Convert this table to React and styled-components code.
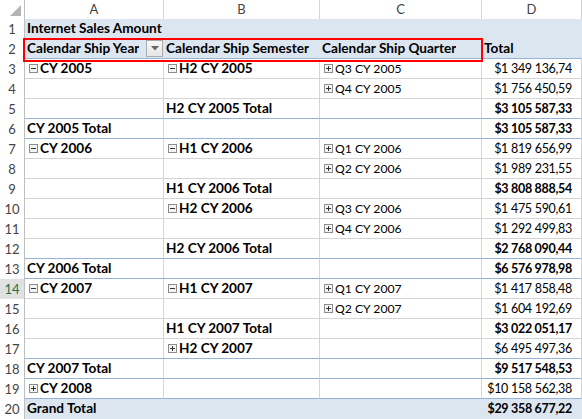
import React from 'react';
import styled, { createGlobalStyle } from 'styled-components';

const GRID = '#d4d4d4';
const BLUE_LINE = '#95b3d7';
const BLUE_FILL = '#dce6f1';
const COLS = '25px 139px 156px 162px 1fr';

const GlobalStyle = createGlobalStyle`
    body {
        margin: 0;
        background: #fff;
        font-family: Lato, 'Liberation Sans', sans-serif;
        font-size: 13px;
        color: #000;
    }
`;

const Sheet = styled.div`
    position: relative;
    width: 582px;
    height: 419px;
    overflow: hidden;
`;

const Row = styled.div`
    display: grid;
    grid-template-columns: ${COLS};
    height: ${(p) => (p.$head ? '19px' : '20px')};
`;

const ColHead = styled.div`
    box-sizing: border-box;
    border-right: 1px solid ${GRID};
    border-bottom: 1px solid ${GRID};
    color: #444;
    text-align: center;
    line-height: 18px;
`;

const Corner = styled.div`
    box-sizing: border-box;
    border-right: 1px solid #bfbfbf;
    border-bottom: 1px solid ${GRID};
`;

const RowNum = styled.div`
    box-sizing: border-box;
    border-right: 1px solid #bfbfbf;
    background: ${(p) => (p.$active ? '#e1e1e1' : '#fff')};
    color: ${(p) => (p.$active ? '#217346' : '#444')};
    text-align: center;
    line-height: 20px;
`;

// Calibri в оригинале: жирный шире, обычный и цифры уже, чем у Lato
const fontSize = (p) => {
    if (p.$num) return '12.5px';
    return p.$bold ? '13.6px' : '12.2px';
};

const Cell = styled.div`
    box-sizing: border-box;
    display: flex;
    align-items: center;
    justify-content: ${(p) => (p.$right ? 'flex-end' : 'flex-start')};
    gap: 2px;
    padding: ${(p) => (p.$right ? '0 9px 0 0' : p.$icon ? '0 0 0 4px' : '0 0 0 2px')};
    background: ${(p) => (p.$fill ? BLUE_FILL : '#fff')};
    border-right: 1px solid ${(p) => (p.$fill ? BLUE_FILL : GRID)};
    border-bottom: 1px solid ${(p) => p.$line};
    font-size: ${fontSize};
    font-weight: ${(p) => (p.$bold ? 700 : 400)};
    letter-spacing: ${(p) => (p.$num ? '-0.3px' : '0')};
    line-height: 19px;
    white-space: pre;
    overflow: hidden;
`;

const Label = styled.span`
    flex: 0 1 auto;
    overflow: hidden;
`;

const FilterButton = styled.div`
    box-sizing: border-box;
    flex: none;
    margin-left: auto;
    width: 17px;
    height: 17px;
    border: 1px solid #ababab;
    background: linear-gradient(#f7f7f7, #e6e6e6);
    display: flex;
    align-items: center;
    justify-content: center;
`;

const Highlight = styled.div`
    position: absolute;
    left: 23px;
    top: 38px;
    width: 460px;
    height: 24px;
    box-sizing: border-box;
    border: 2px solid #ff0000;
    pointer-events: none;
`;

const Toggle = ({ plus }) => (
    <svg width="9" height="9" viewBox="0 0 9 9" style={{ flex: 'none' }}>
        <rect x="0.5" y="0.5" width="8" height="8" fill="#f3f3f3" stroke="#8c8c8c" />
        <line x1="2" y1="4.5" x2="7" y2="4.5" stroke="#333" />
        {plus && <line x1="4.5" y1="2" x2="4.5" y2="7" stroke="#333" />}
    </svg>
);

// строки сводной таблицы: a/b/c — подписи, d — сумма
const b = (t, icon) => ({ t, bold: true, icon });
const n = (t, icon) => ({ t, icon });

const rows = [
    { a: b('Internet Sales Amount'), fill: true },
    {
        a: { ...b('Calendar Ship Year'), filter: true },
        b: b('Calendar Ship Semester'),
        c: b('Calendar Ship Quarter'),
        d: b('Total'),
        dLeft: true,
        fill: true,
        blue: true,
    },
    { a: b('CY 2005', 'minus'), b: b('H2 CY 2005', 'minus'), c: n('Q3 CY 2005', 'plus'), d: n('$1 349 136,74') },
    { c: n('Q4 CY 2005', 'plus'), d: n('$1 756 450,59') },
    { b: b('H2 CY 2005 Total'), d: b('$3 105 587,33'), blue: true },
    { a: b('CY 2005 Total'), d: b('$3 105 587,33'), blue: true },
    { a: b('CY 2006', 'minus'), b: b('H1 CY 2006', 'minus'), c: n('Q1 CY 2006', 'plus'), d: n('$1 819 656,99') },
    { c: n('Q2 CY 2006', 'plus'), d: n('$1 989 231,55') },
    { b: b('H1 CY 2006 Total'), d: b('$3 808 888,54') },
    { b: b('H2 CY 2006', 'minus'), c: n('Q3 CY 2006', 'plus'), d: n('$1 475 590,61') },
    { c: n('Q4 CY 2006', 'plus'), d: n('$1 292 499,83') },
    { b: b('H2 CY 2006 Total'), d: b('$2 768 090,44'), blue: true },
    { a: b('CY 2006 Total'), d: b('$6 576 978,98'), blue: true },
    { a: b('CY 2007', 'minus'), b: b('H1 CY 2007', 'minus'), c: n('Q1 CY 2007', 'plus'), d: n('$1 417 858,48') },
    { c: n('Q2 CY 2007', 'plus'), d: n('$1 604 192,69') },
    { b: b('H1 CY 2007 Total'), d: b('$3 022 051,17') },
    { b: b('H2 CY 2007', 'plus'), d: n('$6 495 497,36'), blue: true },
    { a: b('CY 2007 Total'), d: b('$9 517 548,53'), blue: true },
    { a: b('CY 2008', 'plus'), d: n('$10 158 562,38'), blue: true },
    { a: b('Grand Total'), d: b('$29 358 677,22'), fill: true },
];

const DataCell = ({ cell, fill, line, right }) => (
    <Cell
        $fill={fill}
        $line={line}
        $right={right}
        $num={right}
        $bold={cell?.bold}
        $icon={!!cell?.icon}
    >
        {cell?.icon && <Toggle plus={cell.icon === 'plus'} />}
        {cell && <Label>{cell.t}</Label>}
        {cell?.filter && (
            <FilterButton>
                <svg width="8" height="5" viewBox="0 0 8 5">
                    <polygon points="0,0 8,0 4,4.5" fill="#666" />
                </svg>
            </FilterButton>
        )}
    </Cell>
);

const App = () => {
    return (
        <>
            <GlobalStyle />
            <Sheet>
                <Row $head>
                    <Corner>
                        <svg width="24" height="18" viewBox="0 0 24 18">
                            <polygon points="21,5 21,16 10,16" fill="#b4b4b4" />
                        </svg>
                    </Corner>
                    {['A', 'B', 'C', 'D'].map((c) => (
                        <ColHead key={c}>{c}</ColHead>
                    ))}
                </Row>
                {rows.map((r, i) => {
                    const line = r.blue ? BLUE_LINE : r.fill ? BLUE_FILL : GRID;
                    return (
                        <Row key={i}>
                            <RowNum $active={i + 1 === 14}>{i + 1}</RowNum>
                            <DataCell cell={r.a} fill={r.fill} line={line} />
                            <DataCell cell={r.b} fill={r.fill} line={line} />
                            <DataCell cell={r.c} fill={r.fill} line={line} />
                            <DataCell cell={r.d} fill={r.fill} line={line} right={!r.dLeft} />
                        </Row>
                    );
                })}
                <Highlight />
            </Sheet>
        </>
    );
};

export default App;
